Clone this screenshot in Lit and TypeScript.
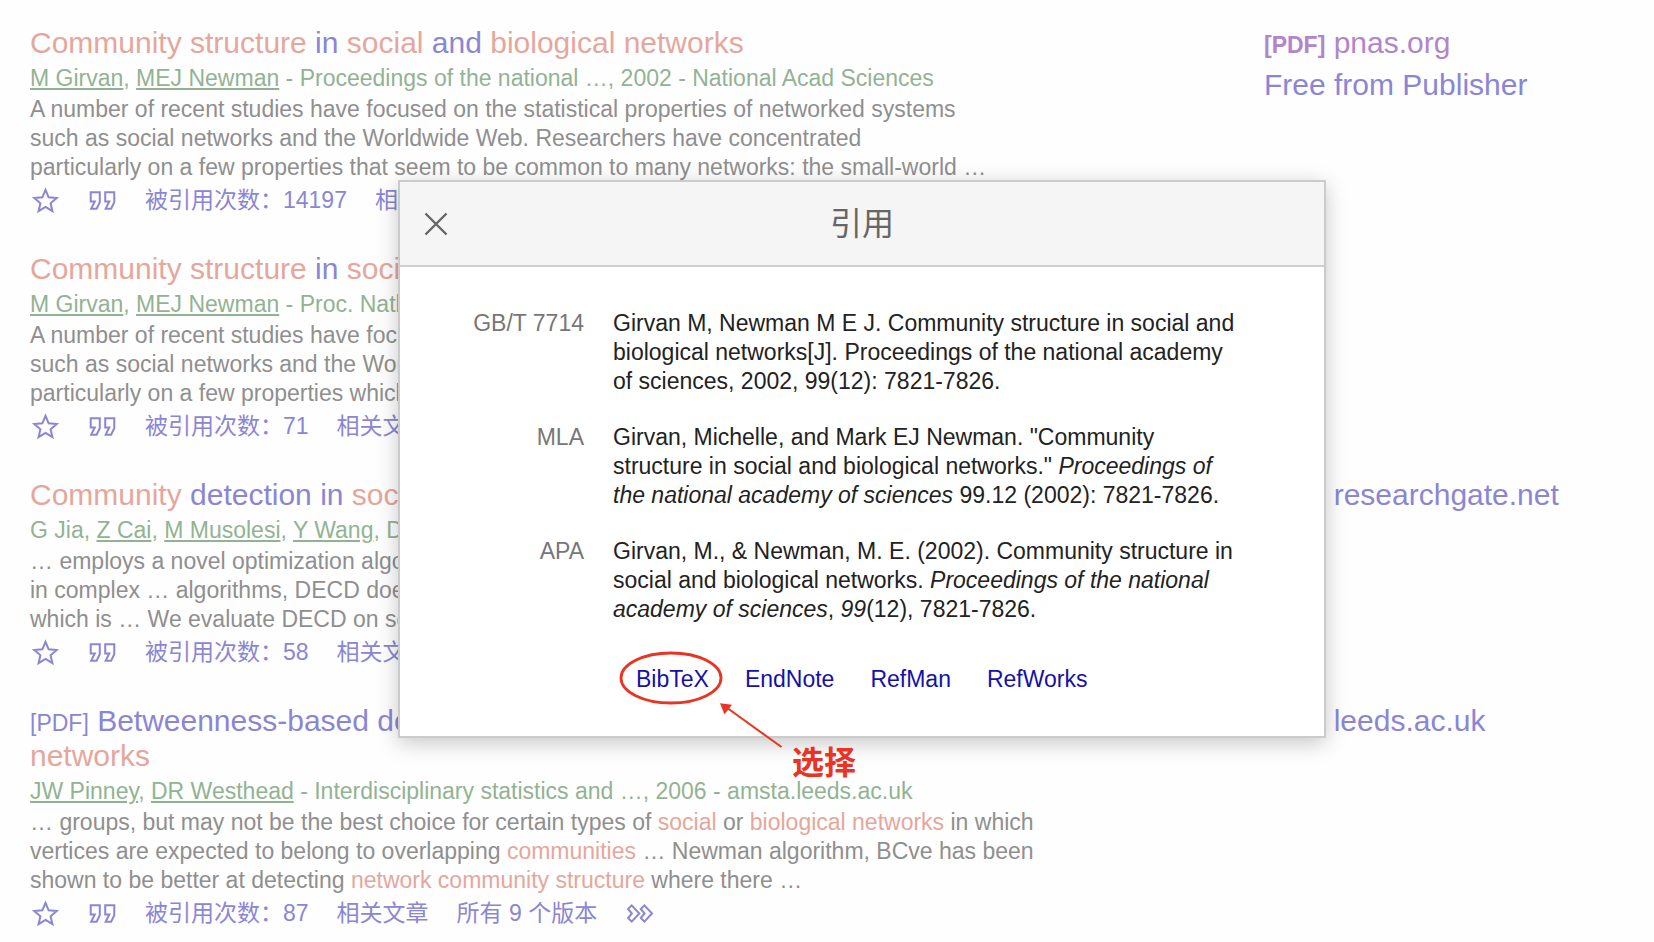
import { LitElement, html, css, svg, TemplateResult } from "lit";
import { customElement, property } from "lit/decorators.js";

interface Result {
  tag?: string;
  title: TemplateResult;
  authors: TemplateResult;
  snippet: TemplateResult;
  cited: number;
  versions: number;
  side: { tag?: string; text: string; visited?: boolean }[];
}

const RESULTS: Result[] = [
  {
    title: html`<b>Community structure</b> in <b>social</b> and <b>biological networks</b>`,
    authors: html`<a href="#">M Girvan</a>, <a href="#">MEJ Newman</a> - Proceedings of the national …, 2002 - National Acad Sciences`,
    snippet: html`A number of recent studies have focused on the statistical properties of networked systems<br>such as social networks and the Worldwide Web. Researchers have concentrated<br>particularly on a few properties that seem to be common to many networks: the small-world …`,
    cited: 14197,
    versions: 71,
    side: [{ tag: "[PDF]", text: "pnas.org", visited: true }, { text: "Free from Publisher" }],
  },
  {
    title: html`<b>Community structure</b> in <b>social</b> and <b>biological networks</b>`,
    authors: html`<a href="#">M Girvan</a>, <a href="#">MEJ Newman</a> - Proc. Natl. Acad. Sci. USA, 2001`,
    snippet: html`A number of recent studies have focused on the statistical properties of networked systems<br>such as social networks and the World-Wide Web. Researchers have concentrated<br>particularly on a few properties which seem to be common to many networks`,
    cited: 71,
    versions: 3,
    side: [],
  },
  {
    title: html`<b>Community</b> detection in <b>social</b> and <b>biological networks</b>`,
    authors: html`G Jia, <a href="#">Z Cai</a>, <a href="#">M Musolesi</a>, <a href="#">Y Wang</a>, DA Tennant`,
    snippet: html`… employs a novel optimization algorithm for community detection<br>in complex … algorithms, DECD does not require any prior knowledge<br>which is … We evaluate DECD on several artificial and real networks`,
    cited: 58,
    versions: 9,
    side: [{ tag: "[PDF]", text: "researchgate.net" }],
  },
  {
    tag: "[PDF]",
    title: html`Betweenness-based decomposition methods for <b>social</b> and <b>biological</b><br><b>networks</b>`,
    authors: html`<a href="#">JW Pinney</a>, <a href="#">DR Westhead</a> - Interdisciplinary statistics and …, 2006 - amsta.leeds.ac.uk`,
    snippet: html`… groups, but may not be the best choice for certain types of <b>social</b> or <b>biological networks</b> in which<br>vertices are expected to belong to overlapping <b>communities</b> … Newman algorithm, BCve has been<br>shown to be better at detecting <b>network community structure</b> where there …`,
    cited: 87,
    versions: 9,
    side: [{ tag: "[PDF]", text: "leeds.ac.uk" }],
  },
];

const icon = (shape: TemplateResult | ReturnType<typeof svg>) =>
  html`<svg class="icon" viewBox="0 0 16 16" aria-hidden="true">${shape}</svg>`;

const STAR = svg`<path d="M8 11.57l3.824 2.308-1.015-4.35 3.379-2.926-4.45-.378L8 2.122 6.261 6.224l-4.449.378 3.379 2.926-1.015 4.35z"/>`;
const QUOTES = svg`<path d="M6.5 3.5h-5v5h2.25l-2 4h3L6.5 9zM14.5 3.5h-5v5h2.25l-2 4h3L14.5 9z"/>`;
const MORE = svg`<path d="M3.7 3.5L1.7 5.500 3.8 8l-2.100 2.500 2 2L7.900 8zM10.700 3.500l-2 2L10.800 8l-2.100 2.500 2 2L14.900 8z"/>`;

@customElement("search-result")
export class SearchResult extends LitElement {
  @property({ attribute: false }) result!: Result;

  static styles = css`
    :host {
      display: grid;
      grid-template-columns: minmax(0, 1fr) 361px;
      white-space: nowrap;
    }
    a { color: inherit; text-decoration: none; }
    b { font-weight: 400; color: #e5a79c; }
    button { all: unset; display: flex; cursor: pointer; }
    .title { margin: 0; font-size: 30px; line-height: 35px; font-weight: 400; color: #8a86d4; }
    .tag { font-size: 23px; line-height: 1; }
    .authors { margin-top: 4px; font-size: 23px; line-height: 29px; color: #92b393; }
    .authors a { text-decoration: underline 2px; text-underline-offset: 2px; }
    .snippet { margin-top: 2px; font-size: 23px; line-height: 29px; color: #8f8f8f; }
    .actions {
      display: flex;
      align-items: center;
      gap: 28px;
      margin-top: 4px;
      padding-left: 1px;
      font-size: 23px;
      line-height: 29px;
      color: #8a86d4;
    }
    .icon { display: block; width: 29px; height: 29px; fill: none; stroke: currentColor; stroke-width: 1.1; }
    .side { display: flex; flex-direction: column; align-items: flex-start; gap: 7px; font-size: 30px; line-height: 35px; color: #8a86d4; }
    .side .tag { font-weight: 700; }
    .visited { color: #b085cb; }
  `;

  render() {
    const r = this.result;
    return html`
      <article>
        <h3 class="title">${r.tag ? html`<span class="tag">${r.tag}</span> ` : ""}<a href="#">${r.title}</a></h3>
        <div class="authors">${r.authors}</div>
        <div class="snippet">${r.snippet}</div>
        <div class="actions">
          <button aria-label="保存">${icon(STAR)}</button>
          <button aria-label="引用">${icon(QUOTES)}</button>
          <a href="#">被引用次数：${r.cited}</a>
          <a href="#">相关文章</a>
          <a href="#">所有 ${r.versions} 个版本</a>
          <button aria-label="更多">${icon(MORE)}</button>
        </div>
      </article>
      <div class="side">
        ${r.side.map((s) => html`<a href="#" class=${s.visited ? "visited" : ""}>${s.tag ? html`<span class="tag">${s.tag}</span> ` : ""}${s.text}</a>`)}
      </div>
    `;
  }
}

@customElement("cite-dialog")
export class CiteDialog extends LitElement {
  static styles = css`
    :host {
      display: block;
      box-sizing: border-box;
      border: 2px solid #cbcbcb;
      background: #fff;
      box-shadow: 0 5px 20px rgba(0, 0, 0, 0.22);
      font-size: 23px;
      line-height: 29px;
    }
    .head {
      display: grid;
      grid-template-columns: 72px 1fr 72px;
      align-items: center;
      height: 83px;
      background: #f5f5f5;
      border-bottom: 2px solid #d0d0d0;
    }
    .close { all: unset; display: flex; justify-content: center; cursor: pointer; }
    .close svg { width: 24px; height: 24px; stroke: #666; stroke-width: 2.4; }
    .heading { margin: 0; font-size: 32px; line-height: 40px; font-weight: 400; color: #666; text-align: center; }
    .body { padding: 42px 84px 42px 56px; }
    .styles { width: 100%; border-collapse: collapse; }
    th, td { padding: 0 0 27px; vertical-align: top; }
    tr:last-child > * { padding-bottom: 0; }
    th { width: 128px; padding-right: 29px; font-weight: 400; text-align: right; color: #777; white-space: nowrap; }
    td { color: #222; }
    .exports { display: flex; gap: 36px; margin-top: 41px; padding-left: 180px; }
    .exports a { color: #1611a6; text-decoration: none; }
  `;

  render() {
    return html`
      <div class="head">
        <button class="close" aria-label="取消">
          <svg viewBox="0 0 24 24" aria-hidden="true"><path d="M1.5 1.5l21 21M22.5 1.5l-21 21" /></svg>
        </button>
        <h2 class="heading">引用</h2>
      </div>
      <div class="body">
        <table class="styles">
          <tr>
            <th scope="row">GB/T 7714</th>
            <td>Girvan M, Newman M E J. Community structure in social and biological networks[J]. Proceedings of the national academy of sciences, 2002, 99(12): 7821-7826.</td>
          </tr>
          <tr>
            <th scope="row">MLA</th>
            <td>Girvan, Michelle, and Mark EJ Newman. "Community structure in social and biological networks." <i>Proceedings of the national academy of sciences</i> 99.12 (2002): 7821-7826.</td>
          </tr>
          <tr>
            <th scope="row">APA</th>
            <td>Girvan, M., &amp; Newman, M. E. (2002). Community structure in social and biological networks. <i>Proceedings of the national academy of sciences</i>, <i>99</i>(12), 7821-7826.</td>
          </tr>
        </table>
        <nav class="exports">
          <a href="#">BibTeX</a><a href="#">EndNote</a><a href="#">RefMan</a><a href="#">RefWorks</a>
        </nav>
      </div>
    `;
  }
}

@customElement("app-root")
export class AppRoot extends LitElement {
  static styles = css`
    :host {
      display: block;
      position: relative;
      min-height: 100vh;
      box-sizing: border-box;
      overflow: hidden;
      padding: 25px 29px 0 30px;
      background: #fefefe;
      font-family: "Liberation Sans", Arial, "Noto Sans CJK SC", sans-serif;
    }
    .results { display: flex; flex-direction: column; gap: 36px; }
    .overlay { position: absolute; left: 398px; top: 180px; width: 928px; }
    .marks { position: absolute; left: 220px; top: 469px; width: 168px; height: 102px; pointer-events: none; }
    .note { position: absolute; left: 394px; top: 563px; font-size: 32px; line-height: 40px; font-weight: 700; color: #ea3323; }
  `;

  render() {
    return html`
      <main class="results">
        ${RESULTS.map((r) => html`<search-result .result=${r}></search-result>`)}
      </main>
      <div class="overlay">
        <cite-dialog role="dialog" aria-label="引用"></cite-dialog>
        <svg class="marks" viewBox="0 0 168 102" aria-hidden="true">
          <ellipse cx="53" cy="29" rx="50" ry="25" fill="none" stroke="#ea3323" stroke-width="2.8" />
          <path d="M110 59.500L163.500 98" stroke="#ea3323" stroke-width="2" />
          <path d="M102 54.300l12 1.500-7.500 9.800z" fill="#ea3323" />
        </svg>
        <span class="note">选择</span>
      </div>
    `;
  }
}
